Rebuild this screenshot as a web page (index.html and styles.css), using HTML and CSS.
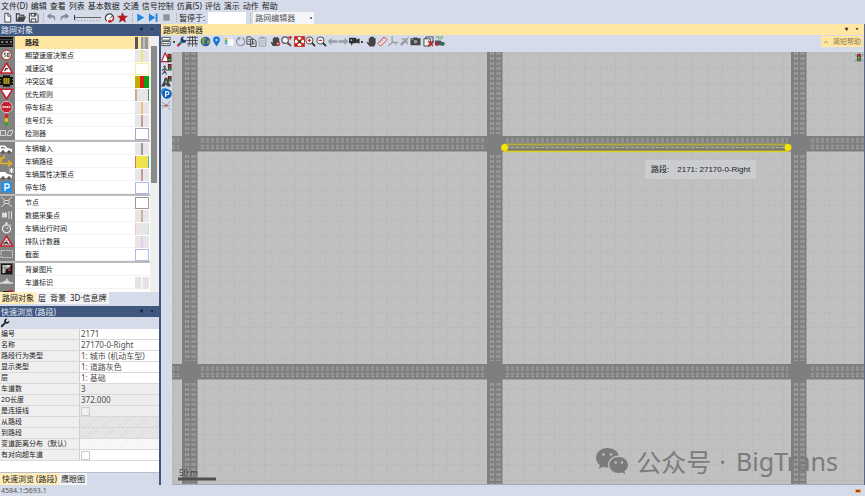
FILE: index.html
```html
<!DOCTYPE html>
<html lang="zh-CN">
<head>
<meta charset="utf-8">
<title>路网编辑器</title>
<link rel="stylesheet" href="styles.css">
</head>
<body>
<nav class="menu">
  <button>文件(D)</button><button>编辑</button><button>查看</button><button>列表</button><button>基本数据</button><button>交通</button><button>信号控制</button><button>仿真(S)</button><button>评估</button><button>演示</button><button>动作</button><button>帮助</button>
</nav>
<div class="toolbar">
  <button aria-label="新建"><svg viewBox="0 0 12 12"><path d="M3 1.5h4l2.5 2.500v7H3z" fill="#f4f6fb" stroke="#444"/><path d="M6.500 1.500V4.500H9.500" fill="none" stroke="#444"/></svg></button>
  <button aria-label="打开"><svg viewBox="0 0 12 12"><path d="M1.500 10V2h3l1 1.500h4V5" fill="none" stroke="#333" stroke-width="1.200"/><path d="M1.500 10.500 4 5h8l-2.500 5.500z" fill="#444"/></svg></button>
  <button aria-label="保存"><svg viewBox="0 0 12 12"><path d="M1.500 1.500h8l1.500 1.500v8H1.500z" fill="#eef1f8" stroke="#333"/><path d="M3.500 1.500v3h5v-3M3.500 11V7.500h5V11" fill="none" stroke="#333"/><path d="M6.500 2h1.500v2H6.500z" fill="#333"/></svg></button>
  <i class="grip"></i>
  <button aria-label="撤销"><svg viewBox="0 0 12 12"><path d="M5 1 1 4.500 5 8V5.700c3 0 4 1 4.500 4.300C11.500 5.500 9 3.300 5 3.300z" fill="#85899a"/></svg></button>
  <button aria-label="重做"><svg viewBox="0 0 12 12"><path d="M7 1l4 3.500L7 8V5.700c-3 0-4 1-4.500 4.300C.5 5.500 3 3.300 7 3.300z" fill="#85899a"/></svg></button>
  <svg class="speed" viewBox="0 0 30 12"><path d="M2.500 3v5" stroke="#333"/><path d="M3 5.500h26" stroke="#666" stroke-width="1"/><path d="M3 8.500h26" stroke="#9a9eab" stroke-dasharray="1 2"/></svg>
  <button aria-label="速度"><svg viewBox="0 0 12 12"><path d="M3 10A4.500 4.500 0 1 1 9 10" fill="#fff" stroke="#444" stroke-width="1.300"/><path d="M6 7l3.500-3" stroke="#444"/><path d="M9 10a4.500 4.500 0 0 0 1-5M5 9h3v2H5z" fill="#c22" stroke="#c22"/></svg></button>
  <button aria-label="收藏"><svg viewBox="0 0 12 12"><path d="M6 .8l1.500 3.500 3.900.3-3 2.600.9 3.800L6 9 2.700 11l.9-3.800-3-2.600 3.900-.3z" fill="#c4161c" stroke="#7a2020" stroke-width=".5"/></svg></button>
  <i class="grip"></i>
  <button aria-label="运行"><svg viewBox="0 0 12 12"><path d="M2.500 1.500 10 6l-7.500 4.500z" fill="#1e86e0"/></svg></button>
  <button aria-label="单步"><svg viewBox="0 0 12 12"><path d="M1 1.500 8 6 1 10.500zM8.300 1.500h2v9h-2z" fill="#1e86e0"/></svg></button>
  <button aria-label="停止"><svg viewBox="0 0 12 12"><path d="M2.500 2.500h7v7h-7z" fill="#8f929b"/></svg></button>
  <i class="grip"></i>
  <label for="pause">暂停于:</label><input id="pause" class="pause" type="text">
  <i class="grip"></i>
  <select class="scope" aria-label="窗口"><option>路网编辑器</option></select><i class="caret"></i>
</div>

<main class="work">
  <aside class="side">
    <section class="objects">
      <h2 class="bar"><span>路网对象</span><b>▾</b><b>▪</b></h2>
      <div class="list">
        <div class="rows">
          <div class="group">
            <button class="row active"><svg viewBox="0 0 14 12"><path d="M0 1h13v10H0z" fill="#111"/><path d="M1 6h11" stroke="#ddd" stroke-dasharray="2.500 2"/><path d="M0 3.500h13M0 8.500h13" stroke="#444"/></svg><span>路段</span><i class="sw sw-link"></i></button>
            <button class="row"><svg viewBox="0 0 14 12"><circle cx="6.500" cy="6" r="4.800" fill="#fff" stroke="#b3402e" stroke-width="1.200"/><path d="M6 4H4.300v1.800c1.800-.5 2 2 0 1.900M7.300 4.200h1.800v3.500H7.300z" fill="none" stroke="#333" stroke-width=".9"/></svg><span>期望速度决策点</span><i class="sw mid yellow"></i></button>
            <button class="row"><svg viewBox="0 0 14 12"><path d="M6.500 1 12.500 11H.5z" fill="#fff" stroke="#c3202c" stroke-width="1.500"/><path d="M4.500 9 6 6.500l2 .5" fill="none" stroke="#222" stroke-width="1.200"/></svg><span>减速区域</span><i class="sw box pale"></i></button>
            <button class="row"><svg viewBox="0 0 14 12"><path d="M3 0h1.500v1h1V0h2v1h1V0H10v2h3v2h-1v1h1v2h-1v1h1v2h-3v2H8.500v-1h-1v1h-2v-1h-1v1H3v-2H0V8h1V7H0V5h1V4H0V2h3z" fill="#15150a"/><path d="M3.500 3h6v6h-6z" fill="#a89b20"/><path d="M5.500 3v6M7.500 3v6" stroke="#5c5510" stroke-width=".6"/></svg><span>冲突区域</span><i class="sw sw-conflict"></i></button>
            <button class="row"><svg viewBox="0 0 14 12"><path d="M.7 1.300h11.800L6.600 11z" fill="#fff" stroke="#c3202c" stroke-width="1.600"/></svg><span>优先规则</span><i class="sw sw-prio"></i></button>
            <button class="row"><svg viewBox="0 0 14 12"><path d="M4.300.5h4.500L12 3.700v4.600l-3.200 3.200H4.300L1 8.300V3.700z" fill="#c3202c" stroke="#eee" stroke-width=".7"/><path d="M3 5v2M5.300 5v2M7.500 5v2M9.800 5v2M3 6h7" stroke="#fff" stroke-width=".8"/></svg><span>停车标志</span><i class="sw mid orange"></i></button>
            <button class="row"><svg viewBox="0 0 14 12"><circle cx="6.500" cy="2" r="1.900" fill="#d9201c"/><circle cx="6.500" cy="6" r="1.900" fill="#e8c31a"/><circle cx="6.500" cy="10" r="1.900" fill="#35a52d"/></svg><span>信号灯头</span><i class="sw mid red"></i></button>
            <button class="row"><svg viewBox="0 0 14 12"><path d="M.5 3.500h5v5h-5zM9 3.500h4l-2 5H7z" fill="none" stroke="#d8d8d8"/></svg><span>检测器</span><i class="sw box violet"></i></button>
          </div>
          <div class="group">
            <button class="row"><svg viewBox="0 0 14 12"><path d="M0 3.500h5l2.500 2.500 4.500 1v3H0z" fill="#fff"/><circle cx="3" cy="10" r="1.700" fill="#555"/><circle cx="9" cy="10" r="1.700" fill="#555"/><path d="M1 5h3l1.500 1.500H1z" fill="#777"/></svg><span>车辆输入</span><i class="sw mid dark"></i></button>
            <button class="row"><svg viewBox="0 0 14 12"><path d="M4 0v3H1v5.500h9M8 5.500l3.500 3L8 11.500" fill="none" stroke="#f2b51d" stroke-width="1.400"/></svg><span>车辆路径</span><i class="sw sw-route"></i></button>
            <button class="row"><svg viewBox="0 0 14 12"><path d="M0 4h5l2.500 2 4.500 1v3H0z" fill="#fff"/><circle cx="3" cy="10" r="1.700" fill="#555"/><circle cx="9" cy="10" r="1.700" fill="#555"/><path d="M11.500 0v5M9.200 1l4.500 3M13.700 1 9.200 4" stroke="#fff"/></svg><span>车辆属性决策点</span><i class="sw mid red"></i></button>
            <button class="row"><svg viewBox="0 0 14 12"><path d="M1.500.5h10v11h-10z" fill="#2191ee"/><path d="M5 10V3h2.300a2 2 0 0 1 0 4H5" fill="none" stroke="#fff" stroke-width="1.300"/></svg><span>停车场</span><i class="sw box blue"></i></button>
          </div>
          <div class="group">
            <button class="row"><svg viewBox="0 0 14 12"><path d="M1 1l4 3.500h3L12 1M1 11l4-3.500h3l4 3.500M4 4.500v3M9 4.500v3" fill="none" stroke="#ddd"/></svg><span>节点</span><i class="sw box gray"></i></button>
            <button class="row"><svg viewBox="0 0 14 12"><path d="M2 4h5v4H2z" fill="#ddd"/><path d="M3 3v6M5.500 3v6M9 2v8M11.500 2v8" stroke="#ddd"/></svg><span>数据采集点</span><i class="sw mid brown"></i></button>
            <button class="row"><svg viewBox="0 0 14 12"><circle cx="6.500" cy="6.800" r="4" fill="none" stroke="#eee" stroke-width="1.200"/><path d="M5 1h3M6.500 1v2M6.500 7l1.800-2M10 2.300l1.200 1.200" stroke="#eee"/></svg><span>车辆出行时间</span><i class="sw sw-time"></i></button>
            <button class="row"><svg viewBox="0 0 14 12"><path d="M6.500 1 12.500 11H.5z" fill="#fff" stroke="#c3202c" stroke-width="1.500"/><path d="M3 9h2V7.500h2V9h3M5.500 6h2" fill="none" stroke="#222" stroke-width="1.200"/></svg><span>排队计数器</span><i class="sw mid lilac"></i></button>
            <button class="row"><svg viewBox="0 0 14 12"><path d="M1 2.500h11.500v7H1z" fill="none" stroke="#ddd" stroke-dasharray="1.500 1"/></svg><span>截面</span><i class="sw box blue"></i></button>
          </div>
          <div class="group">
            <button class="row"><svg viewBox="0 0 14 12"><path d="M1 .5h11.500v11H1z" fill="#1b1b1b"/><path d="M2.500 2h8.500L9 5l-3 1-1 4H2.500z" fill="#cfcfcf"/><path d="M5 2v8M2.500 5H11" stroke="#666" stroke-width=".7"/><path d="M8 6h2.500v2H8z" fill="#c22"/></svg><span>背景图片</span></button>
            <button class="row"><svg viewBox="0 0 14 12"><path d="M0 7h13M3.500 5.500h6M7 2.500v3" stroke="#ddd" stroke-width="1.500"/></svg><span>车道标识</span><i class="sw sw-lane"></i></button>
            <button class="row" aria-label="3D"><svg viewBox="0 0 14 12"><path d="M3 2h6v4H3z" fill="#222"/><circle cx="11" cy="2.500" r="2" fill="#c22"/></svg></button>
          </div>
        </div>
        <div class="scroll"><i></i></div>
      </div>
      <div class="tabs"><button class="on">路网对象</button><button>层</button><button>背景</button><button>3D·信息牌</button></div>
    </section>
    <section class="quick">
      <h2 class="bar"><span>快速浏览 (路段)</span><b>▾</b><b>▪</b></h2>
      <div class="quick-tools"><button aria-label="设置"><svg viewBox="0 0 12 12"><path d="M1.500 10.500 6 6" stroke="#222" stroke-width="2.200"/><path d="M9 .8 7.200 2.600l.3 1.900 2 .3L11.300 3c.4 3-2 4.500-4.500 3.500L5 5C4.500 2.500 6.500.3 9 .8z" fill="#222"/></svg></button></div>
      <table class="props">
        <tr><th>编号</th><td>2171</td></tr>
        <tr><th>名称</th><td>27170-0-Right</td></tr>
        <tr><th>路段行为类型</th><td>1: 城市 (机动车型)</td></tr>
        <tr><th>显示类型</th><td>1: 道路灰色</td></tr>
        <tr><th>层</th><td>1: 基础</td></tr>
        <tr><th>车道数</th><td class="ro">3</td></tr>
        <tr><th>2D长度</th><td class="ro">372.000</td></tr>
        <tr><th><label for="conn">是连接线</label></th><td class="ro"><input id="conn" type="checkbox" disabled></td></tr>
        <tr><th>从路段</th><td class="hatch ro"></td></tr>
        <tr><th>到路段</th><td class="hatch ro"></td></tr>
        <tr><th>变道距离分布（默认）</th><td class="hatch"></td></tr>
        <tr><th><label for="opp">有对向超车道</label></th><td><input id="opp" type="checkbox"></td></tr>
      </table>
      <div class="blank"></div>
      <div class="tabs"><button class="on">快速浏览 (路段)</button><button>鹰眼图</button></div>
    </section>
  </aside>

  <section class="editor">
    <h2 class="editor-title"><span>路网编辑器</span><b>▾</b><b>▪</b></h2>
    <div class="editor-tools">
      <button aria-label="图层"><svg viewBox="0 0 12 12"><path d="M1 1.500h9v3H1zM1 6h9v4.500H1z" fill="#fff" stroke="#444"/><path d="M2 8.300h2" stroke="#d22" stroke-width="1.500"/><path d="M4 8.300h2" stroke="#2a2" stroke-width="1.500"/><path d="M6 8.300h3" stroke="#26c" stroke-width="1.500"/></svg></button><i class="drop"></i>
      <button aria-label="图形参数"><svg viewBox="0 0 12 12"><path d="M1.500 11 5 7.500" stroke="#b03060" stroke-width="2.500"/><path d="M4 8.500 7 5.500" stroke="#2a9440" stroke-width="2.800"/><path d="M8.500.5 7.500 3l1.500 1.500L11.500 4c0 3-2.500 4-4.500 3L5 5C4.500 2.500 6 .5 8.500.5z" fill="#28347c"/></svg></button>
      <button aria-label="线框"><svg viewBox="0 0 12 12"><path d="M0 1.500h12M0 5h12M0 8.500h12M3.500 0 2 11.500M8.500 0 10 11.500M6 0v11.500" stroke="#444" fill="none"/></svg></button>
      <button class="apart" aria-label="背景地图"><svg viewBox="0 0 12 12"><circle cx="6" cy="6" r="5.300" fill="#3159a8"/><path d="M3 2c2-1.500 4 0 3.500 1.500S4 5.500 5 7s-1 3-2 2.500S1 5 3 2zM8 5c1.500-1 3 0 3 1s-1.500 3.500-2.500 3S7 6 8 5z" fill="#78a23a"/></svg></button>
      <button aria-label="位置"><svg viewBox="0 0 12 12"><path d="M6 11.500C4 8 2.300 6.500 2.300 4.300a3.700 3.700 0 0 1 7.400 0C9.700 6.500 8 8 6 11.500z" fill="#1674d4"/><circle cx="6" cy="4.300" r="1.300" fill="#bfdcf7"/></svg></button>
      <button class="apart" aria-label="图例"><svg viewBox="0 0 12 12"><path d="M1 1h8v9H1z" fill="#e8e8ea"/><path d="M4 3h7v8H4z" fill="#f8f8f8" stroke="#c5c7cf" stroke-width=".5"/><path d="M1 3h2.500" stroke="#e5a12a" stroke-width="2"/><path d="M1 5.500h2.500" stroke="#45b25b" stroke-width="2"/><path d="M1 8h2.500" stroke="#3b9be0" stroke-width="2"/></svg></button>
      <button aria-label="刷新"><svg viewBox="0 0 12 12"><path d="M8 2A4.500 4.500 0 1 1 3.500 2.500" fill="none" stroke="#8d92a0" stroke-width="1.300"/><path d="M3 .5 6.500 2 4 5z" fill="#8d92a0"/></svg></button>
      <button aria-label="复制"><svg viewBox="0 0 12 12"><path d="M1 1h4l2 2v6H1zM5 3.500h4l2 2v6H5z" fill="#d9dce5" stroke="#444"/><path d="M6.500 6.500h3M6.500 8.500h3M2.500 4h2M2.500 6h2" stroke="#444" stroke-width=".8"/></svg></button>
      <button aria-label="粘贴"><svg viewBox="0 0 12 12"><path d="M2.500 2h7v9h-7z" fill="#d4d7df" stroke="#999daa"/><path d="M4 .8h4v2H4z" fill="#999daa"/><path d="M4 5h4M4 7h4M4 9h4" stroke="#aaaeb8" stroke-width=".7"/></svg></button>
      <button class="apart" aria-label="移动"><svg viewBox="0 0 12 12"><path d="M3 11 .8 7l1-.6L3 7.500V2.500h1.200V1h1.500v.5h1.500V1h1.400v1.500h1.500V8L9 11z" fill="#444"/><circle cx="8.800" cy="8.500" r="2.500" fill="#a33"/><path d="M7.500 8.500h2.600" stroke="#eee"/></svg></button>
      <button aria-label="区域缩放"><svg viewBox="0 0 12 12"><circle cx="4.500" cy="4.500" r="3.500" fill="#f2f4fa" stroke="#555" stroke-width="1.200"/><path d="M7 7l4 4" stroke="#555" stroke-width="1.800"/><path d="M8 1.500h4M10 0v4M7 9h3" stroke="#c22" stroke-width="1.300"/></svg></button>
      <button class="apart" aria-label="显示全部"><svg viewBox="0 0 12 12"><path d="M.5.5h11v11H.5z" fill="#fff" stroke="#c32a22"/><path d="M1 1h4L1 5zM11 1v4L7 1zM1 11V7l4 4zM11 11H7l4-4z" fill="#c32a22"/><path d="M2 2l8 8M10 2l-8 8" stroke="#c32a22" stroke-width="1.800"/><path d="M4.500 4.500h3v3h-3z" fill="#541"/></svg></button>
      <button aria-label="放大"><svg viewBox="0 0 12 12"><circle cx="4.800" cy="4.800" r="3.800" fill="#f2f4fa" stroke="#555" stroke-width="1.100"/><path d="M7.500 7.500 11 11" stroke="#333" stroke-width="2"/><path d="M3 4.800h3.600M4.800 3v3.600" stroke="#d12c22" stroke-width="1.300"/></svg></button>
      <button aria-label="缩小"><svg viewBox="0 0 12 12"><circle cx="4.800" cy="4.800" r="3.800" fill="#f2f4fa" stroke="#555" stroke-width="1.100"/><path d="M7.500 7.500 11 11" stroke="#333" stroke-width="2"/><path d="M3 4.800h3.600" stroke="#d12c22" stroke-width="1.300"/></svg></button>
      <button aria-label="后退"><svg viewBox="0 0 12 12"><path d="M.5 6 5 2v2.700h6.500v2.600H5V10z" fill="#9b9faa"/></svg></button>
      <button aria-label="前进"><svg viewBox="0 0 12 12"><path d="M11.500 6 7 2v2.700H.5v2.600H7V10z" fill="#9b9faa"/></svg></button>
      <button aria-label="摄像机"><svg viewBox="0 0 12 12"><path d="M0 2h8v2l3.500-1.500v6L8 7v1H4l-1 3-1-3H0z" fill="#333"/><circle cx="2.500" cy="4.500" r="1" fill="#aaa"/></svg></button><i class="drop"></i>
      <button class="apart" aria-label="平移"><svg viewBox="0 0 12 12"><path d="M4 11.500.5 7l1-.8L3 7.500V2.500h1.300V1h1.500V.5h1.500V1h1.500v1.500H10.500V8L9 11.500z" fill="#444"/></svg></button>
      <button aria-label="测距"><svg viewBox="0 0 12 12"><path d="M1 8 8 1l3 3-7 7z" fill="#f6e6e4" stroke="#b5473f"/><path d="M3 6l1.500 1.500M5 4l1.500 1.500M7 2l1.500 1.500" stroke="#b5473f" stroke-width=".8"/></svg></button>
      <button aria-label="三维"><svg viewBox="0 0 12 12"><path d="M4.500 0v7M4.500 7 0 11M4.500 7h7M4.500 5l5 5" fill="none" stroke="#9b9faa" stroke-width="1.400"/></svg></button>
      <button aria-label="飞行"><svg viewBox="0 0 12 12"><path d="M11 .5 7.500 3 2 2l3 3-3 3-1.500-.3L2 9.500l1 2 1-2 3-2.500 3 3-1-5z" fill="#999da8"/></svg></button>
      <button aria-label="截图"><svg viewBox="0 0 12 12"><path d="M.5 2.500h3L4 1.500h4l.5 1h3V10H.5z" fill="#444"/><circle cx="6" cy="6.200" r="2" fill="#999"/><path d="M1.500 4h2" stroke="#bbb"/></svg></button>
      <button class="apart" aria-label="删除视图"><svg viewBox="0 0 12 12"><path d="M1 3h7v8H1z" fill="#eee" stroke="#444"/><path d="M3 3V1h8v7H9" fill="none" stroke="#444"/><path d="M5.500 5.500l5.500 5.500M11 5.500 5.500 11" stroke="#c2211c" stroke-width="1.500"/></svg></button>
      <button aria-label="模式"><svg viewBox="0 0 12 12"><path d="M2 1h4M7 1h3M4 3h5" stroke="#7a7" stroke-width="1.300"/><path d="M1 5h6l2 2h2.500v3H1z" fill="#456"/><circle cx="3.500" cy="8.500" r="2.200" fill="#933"/><circle cx="9" cy="8.500" r="2.200" fill="#465"/></svg></button>
      <button class="help"><svg viewBox="0 0 6 6"><path d="M1 4.500 3 2l2 2.500" fill="none" stroke="#a08a58" stroke-width=".8"/></svg>简短帮助</button>
    </div>
    <div class="stage">
      <div class="rail">
        <button aria-label="警示信号"><svg viewBox="0 0 12 12"><path d="M4.500 1 9 10.500H.5z" fill="#fff" stroke="#c3202c" stroke-width="1.300"/><path d="M7 2h4.500v9H7z" fill="#443324"/><circle cx="9.300" cy="4" r="1.400" fill="#d22"/><circle cx="9.300" cy="8.500" r="1.400" fill="#2a4"/></svg></button>
        <button aria-label="行人信号"><svg viewBox="0 0 12 12"><circle cx="4" cy="3" r="1.300" fill="#555"/><path d="M4 4.500v3L1.500 11.500M4 7.500l2 4M1 7l3-2 3 2" fill="none" stroke="#555" stroke-width="1.300"/><path d="M7.500 0h4v7h-4z" fill="#332f28"/><circle cx="9.500" cy="2" r="1.300" fill="#d22"/><circle cx="9.500" cy="5" r="1.300" fill="#2a4"/></svg></button>
        <button aria-label="道路信号"><svg viewBox="0 0 12 12"><path d="M4 2h3l.5 3L11 11.500H7L5.500 9 4 11.500H0L3 6z" fill="#444"/><path d="M5.500 5v3" stroke="#ddd"/><path d="M7.500 0h4v6h-4z" fill="#332f28"/><circle cx="9.500" cy="1.700" r="1.200" fill="#d22"/><circle cx="9.500" cy="4.500" r="1.200" fill="#2a4"/></svg></button>
        <button aria-label="停车"><svg viewBox="0 0 12 12"><circle cx="4" cy="4" r="4" fill="#3795dc"/><circle cx="6.500" cy="6.500" r="5.200" fill="#0b62b8"/><path d="M5 9.800V4h2a1.600 1.600 0 0 1 0 3.300H5" fill="none" stroke="#fff" stroke-width="1.200"/></svg></button>
        <button aria-label="节点"><svg viewBox="0 0 12 12"><path d="M1 2l5 4 4-5M1 9l5-3 4.500 5M6 6h4M0 6h6" fill="none" stroke="#888" stroke-width=".8"/><circle cx="5.500" cy="6" r="1.400" fill="#c66"/></svg></button>
      </div>
      <div class="map">
        <svg class="net" viewBox="0 0 692 432" preserveAspectRatio="xMinYMin slice">
          <defs>
            <pattern id="grid" x="31.200" y="15.800" width="15.250" height="15.250" patternUnits="userSpaceOnUse"><path d="M0 .5h15.250M.5 0v15.250" stroke="#b6b6b6" stroke-width="1" stroke-dasharray="3 2.080" fill="none"/></pattern>
            <g id="vroad"><path d="M0 0h15.500v432H0z" fill="#7f7f7f"/><path d="M5 0v82M5 103v206M5 331v101M11.500 0v82M11.500 103v206M11.500 331v101" stroke="#8f8f8f" stroke-width="3" stroke-dasharray="3 2"/><path d="M3.500 0v82M3.500 103v206M3.500 331v101M6.500 0v82M6.500 103v206M6.500 331v101M10 0v82M10 103v206M10 331v101M13 0v82M13 103v206M13 331v101" stroke="#a6a6a6" stroke-width=".9" stroke-dasharray="3 2"/></g>
            <g id="hroad"><path d="M0 0h692v15.500H0z" fill="#7f7f7f"/><path d="M0 4.500h7M29 4.500h283M334 4.500h282M639 4.500h53M0 11h7M29 11h283M334 11h282M639 11h53" stroke="#8d8d8d" stroke-width="3" stroke-dasharray="3 2"/><path d="M0 3h7M29 3h283M334 3h282M639 3h53M0 6h7M29 6h283M334 6h282M639 6h53M0 9.500h7M29 9.500h283M334 9.500h282M639 9.500h53M0 12.500h7M29 12.500h283M334 12.500h282M639 12.500h53" stroke="#a0a0a0" stroke-width=".9" stroke-dasharray="3 2"/></g>
          </defs>
          <path d="M0 0h692v432H0z" fill="#c0c0c0"/>
          <path d="M0 0h692v432H0z" fill="url(#grid)"/>
          <use href="#vroad" x="10"/><use href="#vroad" x="315"/><use href="#vroad" x="619"/>
          <use href="#hroad" y="84"/><use href="#hroad" y="312"/>
          <g fill="none"><path d="M332 91.500h284v8H332z" fill="#85857e"/><path d="M332 92.500h284" stroke="#b3aa42" stroke-width="2"/><path d="M334 95.500h280" stroke="#b9b683" stroke-dasharray="3 2"/><path d="M332 97.500h284" stroke="#77776c"/><path d="M332 99.500h284" stroke="#dccf1e" stroke-width="1.300"/></g>
          <circle cx="332.500" cy="95.500" r="3.500" fill="#f5e400"/><circle cx="616" cy="95.500" r="3.500" fill="#f5e400"/>
          <path d="M6 427h38" stroke="#505050" stroke-width="3"/>
        </svg>
        <span class="scale">50 m</span>
        <svg class="signal" viewBox="0 0 12 12"><path d="M1 2l10 8M11 2 1 10" stroke="#777"/><path d="M4 1h4v9H4z" fill="#222"/><circle cx="6" cy="3" r="1.400" fill="#d22"/><circle cx="6" cy="5.500" r="1.200" fill="#db2"/><circle cx="6" cy="8" r="1.400" fill="#2b4"/></svg>
        <div class="tip"><span>路段:</span><span>2171: 27170-0-Right</span></div>
        <div class="mark">
          <svg viewBox="0 0 32 27"><path d="M11.500 0C5 0 0 4.300 0 9.800c0 3 1.600 5.700 4 7.500l-1.200 3.500 4.300-2c1.500.5 3.500.8 5.300.6C10.500 12 17 7.500 22.800 7.600 21.700 3 17 0 11.500 0z"/><path d="M32 17c0-4.500-4.300-8-9.300-8s-9.400 3.500-9.400 8 4.400 8 9.400 8c1.200 0 2.400-.2 3.400-.5l3.200 1.800-.8-3C30.700 21.700 32 19.500 32 17z"/><g fill="#c0c0c0"><circle cx="7.500" cy="6.500" r="1.300"/><circle cx="15" cy="6.500" r="1.300"/><circle cx="19.700" cy="14.500" r="1.200"/><circle cx="26" cy="14.500" r="1.200"/></g></svg>
          <span>公众号</span><span class="brand">·</span><span class="brand name">BigTrans</span>
        </div>
      </div>
    </div>
  </section>
</main>
<footer class="status"><span>4584.1:5693.1</span><i class="alert"></i></footer>
</body>
</html>
```
FILE: styles.css
```css
* { box-sizing: border-box; }
body {
  margin: 0;
  height: 100vh;
  display: flex;
  flex-direction: column;
  overflow: hidden;
  background: #d6dbe9;
  color: #222;
  font: 8px/11px "Noto Sans", "Noto Sans CJK SC", sans-serif;
}
button { margin: 0; padding: 0; border: 0; background: none; color: inherit; font: inherit; white-space: nowrap; }
svg { display: block; }
h2 { margin: 0; font: inherit; }

.menu { display: flex; flex: none; gap: 3px; height: 11px; padding-left: 1px; }

.toolbar { display: flex; flex: none; align-items: center; gap: 2px; height: 13px; padding-left: 2px; }
.toolbar button svg { width: 11px; height: 11px; }
.toolbar .speed { width: 30px; height: 12px; }
.grip { flex: none; width: 3px; height: 9px; border-right: 1px dotted #a2a7b6; }
.pause { width: 38px; height: 12px; margin-left: 1px; padding: 0 2px; border: 0; background: #fff; font: inherit; }
.scope { appearance: none; width: 61px; height: 12px; padding: 0 2px; border: 0; border-radius: 0; background: #f4f5f9; color: #555; font: inherit; line-height: 12px; }
.caret { width: 2px; height: 2px; margin-left: -6px; background: #777; }

.work { display: flex; flex: 1; min-height: 0; }
.side { display: flex; flex: none; flex-direction: column; width: 161px; border-right: 2px solid #40577f; }
.bar { display: flex; gap: 6px; height: 12px; padding: 0 4px 0 1px; background: #40577f; color: #e6ebf5; }
.bar span, .editor-title span { flex: 1; }
.bar b { color: #111a2c; font-size: 6px; }

.objects { display: flex; flex: 1; flex-direction: column; min-height: 0; padding-bottom: 2px; }
.list { display: flex; flex: 1; min-height: 0; overflow: hidden; background: #fff; }
.rows { flex: 1; overflow: hidden; }
.group { border-bottom: 2px solid #bcbcbc; }
.row { display: flex; align-items: center; width: 100%; height: 13px; text-align: left; font-size: 7px; }
.row svg { flex: none; width: 15px; height: 13px; padding: 0 1px 1px 0; background: #828282; }
.row span { flex: 1; height: 13px; padding-left: 10px; line-height: 13px; border-bottom: 1px solid #f3f3f3; }
.row.active { background: #ffe6a2; font-weight: bold; }
.row.active span { border: 0; }
.sw { flex: none; width: 14px; height: 12px; margin-right: 1px; background: #e6e6e6; }
.sw-link { background: linear-gradient(90deg, #555 3px, #ffe6a2 3px 6px, #999 6px 8px, #bbb 8px 10px, #999 10px 13px, #ddd 13px); }
.sw-conflict { background: linear-gradient(90deg, #bfae00 5px, #e01a10 5px 9px, #0ca010 9px); }
.sw-prio { border-left: 2px solid #cfa792; border-right: 1px solid #3f9a50; }
.sw-route { background: #efe24f; border-left: 1px solid #d07a5a; border-right: 1px solid #4ab8b0; }
.sw-time { border-left: 1px solid #f2c6c6; border-right: 1px solid #bfe8bf; }
.sw-lane { background: linear-gradient(90deg, #e3e3e3 6px, #f4f4f4 6px 8px, #e3e3e3 8px); }
.mid { background: linear-gradient(90deg, #e6e6e6 6px, var(--c) 6px 8px, #e6e6e6 8px); }
.yellow { --c: #eee27a; }
.orange { --c: #f0bd7c; }
.red { --c: #c99a9a; }
.dark { --c: #999; }
.brown { --c: #c9b3a0; }
.lilac { --c: #e5cdf0; }
.box { background: #fff; border: 1px solid var(--c); }
.pale { --c: #f4f09a; }
.violet { --c: #aaa6c8; }
.blue { --c: #b4b6e2; }
.gray { --c: #999; }
.scroll { flex: none; width: 9px; padding: 10px 2px 0 1px; background: #efefef; }
.scroll i { display: block; height: 137px; background: #8a8a8a; }

.tabs { display: flex; flex: none; height: 12px; line-height: 12px; }
.tabs button { padding: 0 2px; background: #f4f4f6; }
.tabs .on { background: #ffeebb; }

.quick { flex: none; }
.quick .bar { height: 11px; }
.quick-tools { height: 12px; padding: 1px 0 0; }
.quick-tools svg { width: 10px; height: 10px; }
.props { width: 100%; table-layout: fixed; border-collapse: collapse; background: #fff; }
.props tr { height: 11px; }
.props th, .props td { height: 11px; padding: 0 0 0 1px; border-bottom: 1px solid #d9d9d9; line-height: 10px; text-align: left; white-space: nowrap; }
.props th { background: #efefef; border-right: 1px solid #d0d0d0; font-weight: normal; font-size: 7px; }
.props td { color: #4c4c4c; }
.props .ro { background: #ededed; }
.props .hatch { background: repeating-linear-gradient(135deg, #f0f0f0 0 1px, #fafafa 1px 3px); }
.props .hatch.ro { background: repeating-linear-gradient(135deg, #dadada 0 1px, #e8e8e8 1px 3px); }
.props input { appearance: none; display: block; width: 9px; height: 9px; margin: 0; border: 1px solid #ccc; background: #fff; }
.props input:disabled { background: #f0f0f0; }
.blank { height: 12px; background: #fff; border-bottom: 1px solid #b9bdca; }

.editor { display: flex; flex: 1; flex-direction: column; min-width: 0; border-right: 1px solid #5b6883; }
.editor-title { display: flex; flex: none; gap: 6px; height: 11px; padding: 0 4px 0 2px; background: #ffe6a2; }
.editor-title b { font-size: 6px; }
.editor-tools { display: flex; flex: none; height: 17px; padding-top: 1px; }
.editor-tools button { width: 11px; height: 11px; }
.editor-tools button svg { width: 11px; height: 11px; }
.editor-tools .apart { margin-left: 2px; }
.drop { width: 2px; height: 2px; margin: 5px 1px 0; background: #444; }
.editor-tools .help { display: flex; align-items: center; gap: 4px; width: auto; margin: 0 1px 0 auto; padding: 0 2px; background: #ffe6a2; color: #8d7a4d; font-size: 7px; }
.editor-tools .help svg { width: 6px; height: 6px; }

.stage { display: flex; flex: 1; min-height: 0; }
.rail { display: flex; flex: none; flex-direction: column; gap: 1px; width: 11px; }
.rail button, .rail svg { width: 11px; height: 11px; }
.map { position: relative; flex: 1; overflow: hidden; background: #c0c0c0; border-bottom: 1px solid #a6a9b3; }
.net { position: absolute; inset: 0; width: 100%; height: 100%; }
.scale { position: absolute; left: 7px; bottom: 6px; color: #444; }
.signal { position: absolute; top: 1px; right: 0; width: 10px; height: 10px; }
.tip { position: absolute; left: 473px; top: 108px; display: flex; gap: 8px; padding: 4px 6px; background: #cacccf; font-family: "Liberation Sans", "Noto Sans CJK SC", sans-serif; }
.mark { position: absolute; right: 26px; bottom: 8px; display: flex; align-items: center; gap: 8px; color: #7b7b7b; font: 25px/30px "Noto Sans CJK SC", sans-serif; }
.mark svg { width: 32px; height: 27px; fill: #7b7b7b; }
.mark .brand { font-family: "Noto Sans", sans-serif; }
.mark .name { padding-left: 2px; }

.status { display: flex; flex: none; align-items: center; justify-content: space-between; height: 11px; padding: 0 4px 0 1px; color: #555; font-size: 7px; }
.alert { width: 6px; height: 4px; background: #8a4a20; border: 1px solid #f0b060; }
```
